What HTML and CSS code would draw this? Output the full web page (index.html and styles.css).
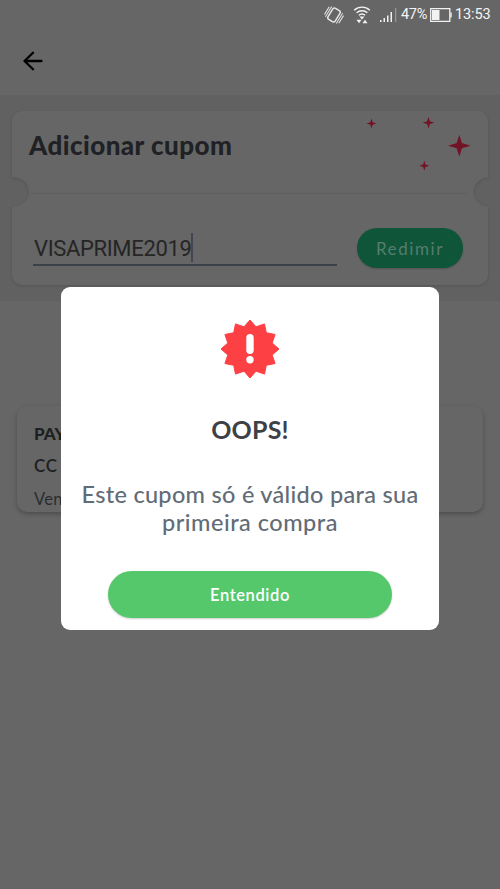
FILE: index.html
```html
<!DOCTYPE html>
<html lang="pt-BR">
<head>
<meta charset="utf-8">
<title>Adicionar cupom</title>
<link rel="stylesheet" href="styles.css">
</head>
<body>
<div class="screen">
  <header class="status">
    <svg class="rotate" width="20" height="20" viewBox="0 0 20 20" fill="none" stroke="#e6e6e6">
      <g transform="rotate(32 10 10)">
        <rect x="5.800" y="3.500" width="8.400" height="13" rx="2" stroke-width="1.500"/>
        <path d="M3.600 4v12M1.600 5.500v9M16.400 4v12M18.400 5.500v9" stroke-width="1"/>
      </g>
    </svg>
    <svg class="wifi" width="18" height="20" viewBox="0 0 18 20" fill="none" stroke="#f2f2f2" stroke-width="1.4">
      <path d="M1.200 5.200a11.500 11.500 0 0 1 15.600 0M3.600 7.800a8 8 0 0 1 10.800 0M5.800 10.300a5 5 0 0 1 6.400 0"/>
      <path d="M6.500 11.500h5L9 14.500zM3.500 14.800h5L6 18.300zM9.500 18.300h5L12 14.800z" fill="#f2f2f2" stroke="none"/>
    </svg>
    <svg class="signal" width="17" height="16" viewBox="0 0 17 16" fill="#f2f2f2">
      <path d="M0 13h1.500v2H0zM3.500 11h1.500v4H3.500zM7 8.500h1.500V15H7zM10.500 5h1.500v10h-1.500z"/>
      <path d="M15 1h1.300v14H15z" opacity=".35"/>
    </svg>
    <span class="percent">47%</span>
    <svg class="battery" width="22" height="14" viewBox="0 0 22 14" fill="none">
      <path d="M.700.700h19.100v12.600H.700z" stroke="#f2f2f2" stroke-width="1.300"/>
      <path d="M2 2h7.500v10H2zM20.300 4.500h1.400v5h-1.400z" fill="#f2f2f2"/>
    </svg>
    <span class="clock">13:53</span>
  </header>

  <nav class="toolbar">
    <svg width="20" height="20" viewBox="0 0 20 20" fill="none" stroke="#000" stroke-width="2.300" stroke-linecap="round" stroke-linejoin="round">
      <path d="M18.500 10H1.500M10 1.700 1.500 10l8.500 8.300"/>
    </svg>
  </nav>

  <section class="band">
    <div class="ticket">
      <svg class="shape" width="476" height="174" viewBox="0 0 476 174">
        <path class="paper" d="M10 0H466A10 10 0 0 1 476 10V66.500A14.500 14.500 0 0 0 476 95.500V164A10 10 0 0 1 466 174H10A10 10 0 0 1 0 164V98Q0 96 2.500 95.500A14.500 14.500 0 0 0 2.500 66.500H0V10A10 10 0 0 1 10 0z"/>
        <path d="M17 82.500H456" stroke="#5f5f5f" stroke-width="1"/>
        <g fill="#731426">
          <path d="M359.500 7.500 360.700 11.300 364.300 12.500 360.700 13.700 359.500 17.500 358.300 13.700 354.500 12.500 358.300 11.300z"/>
          <path d="M416.500 6 417.900 10.300 422.300 11.700 417.900 13.100 416.500 17.500 415.100 13.100 410.700 11.700 415.100 10.300z"/>
          <path d="M412.300 49.800 413.500 53.500 417.300 54.700 413.500 55.900 412.300 59.700 411.100 55.900 407.300 54.700 411.100 53.500z"/>
          <path d="M447.300 23.700 449.900 32.100 458.500 34.700 449.900 37.300 447.300 45.700 444.700 37.300 436.100 34.700 444.700 32.100z"/>
        </g>
      </svg>
      <h1 class="title">Adicionar cupom</h1>
      <div class="form">
        <div class="field"><span class="code">VISAPRIME2019</span><i class="caret"></i></div>
        <button class="redeem">Redimir</button>
      </div>
    </div>
  </section>

  <section class="coupon">
    <b class="c1">PAY</b>
    <span class="c2">CC</span>
    <span class="c3">Ven</span>
  </section>

  <div class="dialog">
    <svg class="alert" width="60" height="60" viewBox="-30 -30 60 60">
      <path fill="#fd4044" stroke="#fd4044" stroke-linejoin="round" d="M0-29 6-22.200 14.500-25.100 16.300-16.300 25.100-14.500 22.200-6 29 0 22.200 6 25.100 14.500 16.300 16.300 14.500 25.100 6 22.200 0 29-6 22.200-14.500 25.100-16.300 16.300-25.100 14.500-22.200 6-29 0-22.200-6-25.100-14.500-16.300-16.300-14.500-25.100-6-22.200z"/>
      <rect x="-3.700" y="-15" width="7.400" height="20" rx="3.700" fill="#fff"/>
      <circle cx="0" cy="10.800" r="3.700" fill="#fff"/>
    </svg>
    <h2 class="oops">OOPS!</h2>
    <p class="message"><span class="l1">Este cupom só é válido para sua</span><br><span class="l2">primeira compra</span></p>
    <button class="ok">Entendido</button>
  </div>
</div>
</body>
</html>
```
FILE: styles.css
```css
* { box-sizing: border-box; }
body { margin: 0; background: #666; font-family: Lato, sans-serif; }
h1, h2, p { margin: 0; }
button { border: 0; padding: 0; font-family: inherit; }
.screen { position: relative; width: 500px; height: 889px; overflow: hidden; background: #666; }

.status { display: flex; align-items: center; height: 29px; padding-left: 324px; color: #f5f5f5; font-family: Roboto, sans-serif; line-height: 29px; white-space: nowrap; }
.status svg { flex: none; }
.wifi { margin-left: 9px; }
.signal { margin-left: 9px; }
.percent { width: 26px; margin-left: 4px; font-size: 14.500px; letter-spacing: -.3px; }
.battery { margin-left: 3px; }
.clock { margin-left: 3px; font-size: 14.500px; letter-spacing: -.1px; }

.toolbar { height: 66px; padding: 22px 0 0 23px; }
.toolbar svg { display: block; }

.band { height: 206px; padding: 16px 12px 0; background: #616161; }
.ticket { position: relative; height: 174px; padding: 19px 25px 0 17px; }
.shape { position: absolute; left: 0; top: 0; overflow: visible; filter: drop-shadow(0 1px 1.500px rgba(0, 0, 0, .13)); }
.paper { fill: #666; }
.title { position: relative; height: 98px; color: #1f2124; font-size: 26px; font-weight: 900; line-height: 30px; letter-spacing: .45px; }
.form { position: relative; display: flex; justify-content: space-between; padding-left: 4px; }
.field { display: flex; width: 304px; height: 38px; padding: 5px 0 0 1px; border-bottom: 2px solid #3a4149; }
.code { color: #252525; font: 22px/31px Roboto, sans-serif; letter-spacing: -.35px; }
.caret { width: 2px; height: 29px; background: #42464e; }
.redeem { width: 106px; height: 40px; border-radius: 20px; background: #0f553a; color: #567d6c; font-size: 17px; letter-spacing: 1.600px; box-shadow: 0 1px 2px rgba(0, 0, 0, .2); }

.coupon { display: flex; flex-direction: column; width: 466px; height: 106px; margin: 105px 0 0 17px; padding: 16px 0 0 17px; border-radius: 10px; background: #666; box-shadow: 0 2px 4px rgba(0, 0, 0, .26); color: #1d1f22; font-size: 17px; line-height: 24px; }
.c1 { height: 32px; font-weight: 900; }
.c2 { height: 33px; font-weight: 600; letter-spacing: .8px; }
.c3 { color: #292d30; font-size: 16.500px; letter-spacing: .3px; }

.dialog { position: absolute; left: 61px; top: 287px; width: 378px; height: 343px; display: flex; flex-direction: column; align-items: center; padding-top: 32px; border-radius: 9px; background: #fff; }
.alert { display: block; flex: none; }
.oops { margin-top: 33px; height: 68px; color: #3d4145; font-size: 25px; font-weight: 700; line-height: 34px; letter-spacing: .2px; }
.message { height: 91px; text-align: center; color: #626c76; font-size: 23.500px; line-height: 28px; white-space: nowrap; font-weight: 500; letter-spacing: .3px; }
.l2 { letter-spacing: .5px; }
.ok { width: 284px; height: 47px; flex: none; padding-top: 1px; border-radius: 24px; background: #55c86b; color: #fff; font-size: 16.500px; font-weight: 600; letter-spacing: .6px; box-shadow: 0 1px 2px rgba(0, 0, 0, .2); }
```
